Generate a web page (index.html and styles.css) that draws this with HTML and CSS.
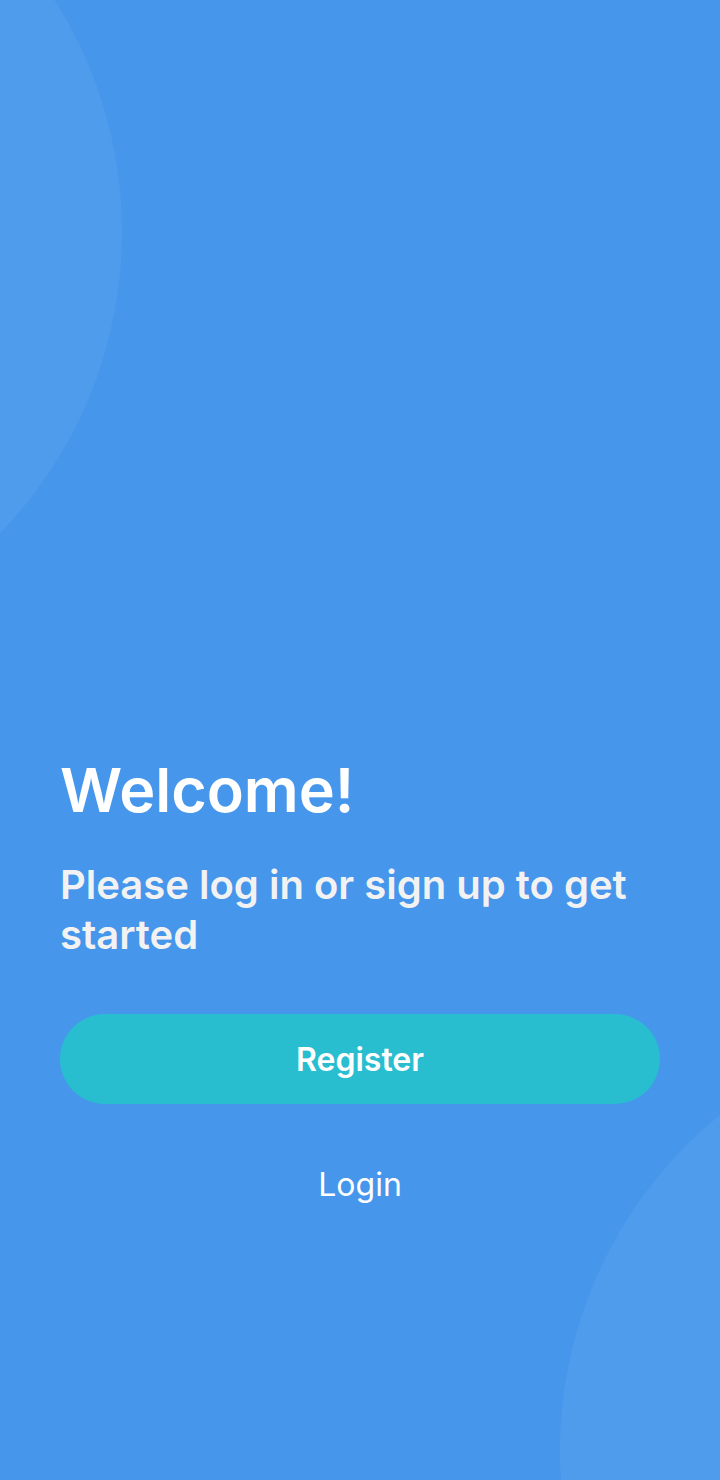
FILE: index.html
```html
<!DOCTYPE html>
<html lang="en">
<head>
<meta charset="utf-8">
<meta name="viewport" content="width=device-width, initial-scale=1">
<title>Welcome</title>
<link rel="stylesheet" href="styles.css">
</head>
<body>
<main class="screen">
  <div class="circle circle-top" aria-hidden="true"></div>
  <div class="circle circle-bottom" aria-hidden="true"></div>
  <section class="content">
    <h1 class="title">Welcome!</h1>
    <p class="subtitle">Please log in or sign up to get started</p>
    <div class="actions">
      <button class="button button-primary" type="button">Register</button>
      <button class="button button-text" type="button">Login</button>
    </div>
  </section>
</main>
</body>
</html>
```

FILE: styles.css
```css
* {
  box-sizing: border-box;
}

body {
  margin: 0;
  font-family: Inter, Lato, sans-serif;
  color: #fff;
  background: #4696ec;
}

.screen {
  position: relative;
  display: flex;
  flex-direction: column;
  justify-content: flex-end;
  min-height: 100vh;
  padding: 60px 60px 250px;
  overflow: hidden;
}

.circle {
  position: absolute;
  width: 866px;
  aspect-ratio: 1;
  border-radius: 50%;
  background: #4f9ced;
}

.circle-top {
  top: -201px;
  left: -744px;
}

.circle-bottom {
  bottom: -404px;
  right: -706px;
}

.content {
  position: relative;
}

.title {
  margin: 0 0 34px;
  font-size: 61px;
  line-height: 72px;
  font-weight: 600;
}

.subtitle {
  margin: 0 0 54px;
  font-size: 40px;
  line-height: 50px;
  font-weight: 600;
  color: #f2f2f2;
}

.actions {
  display: flex;
  flex-direction: column;
  gap: 36px;
}

.button {
  width: 100%;
  min-height: 90px;
  padding: 0 24px;
  border: 0;
  border-radius: 45px;
  font: inherit;
  font-size: 32px;
  line-height: 40px;
  color: #fff;
  background: transparent;
  cursor: pointer;
}

.button-primary {
  padding-top: 2px;
  font-weight: 600;
  background: #28bed0;
}

.button-text {
  font-weight: 400;
}
```
